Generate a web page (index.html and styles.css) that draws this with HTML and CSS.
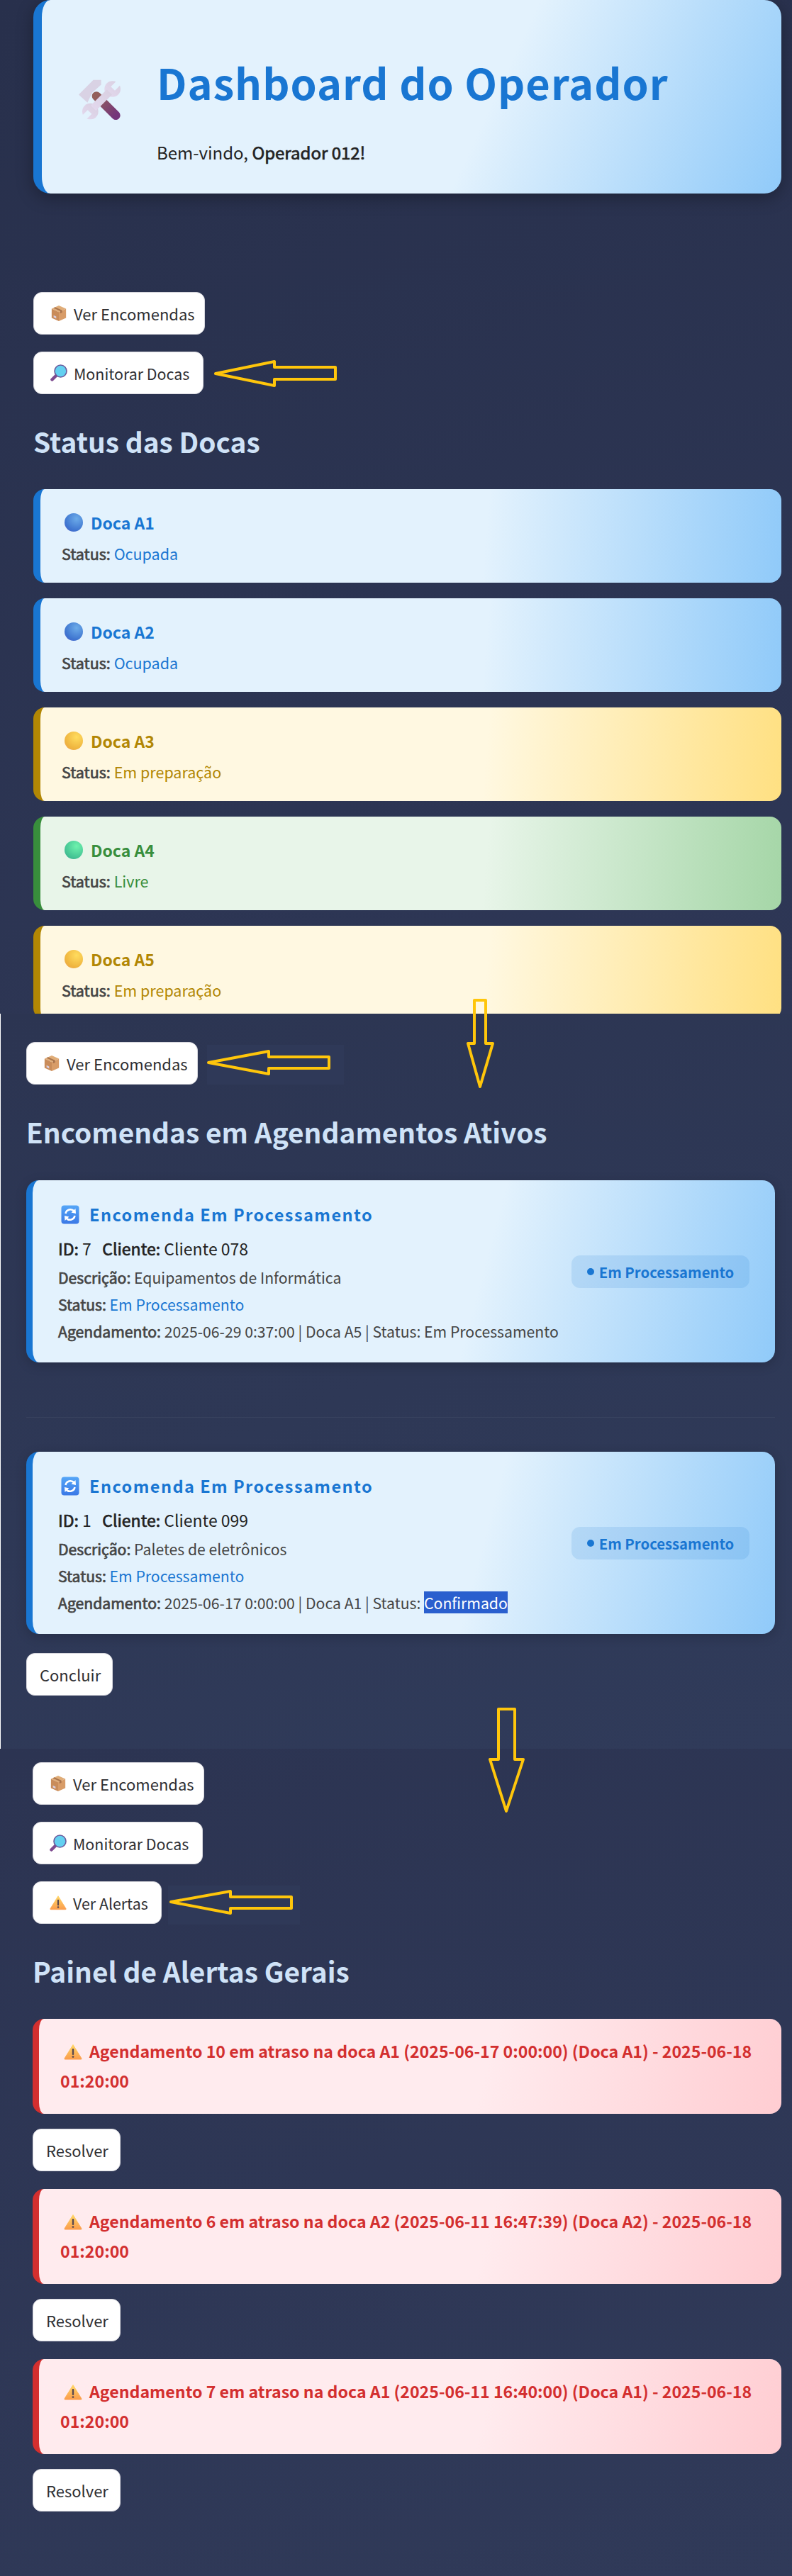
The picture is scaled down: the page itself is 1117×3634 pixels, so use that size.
FILE: index.html
```html
<!DOCTYPE html>
<html lang="pt">

<head>
    <meta charset="utf-8">
    <title>Dashboard do Operador</title>
    <link rel="stylesheet" href="styles.css">
</head>

<body>
    <svg class="defs" width="0" height="0">
        <defs>
            <linearGradient id="gCabo" x1="0" y1="0" x2="1" y2="1">
                <stop offset="0" stop-color="#94605a" />
                <stop offset="1" stop-color="#74357a" />
            </linearGradient>
            <linearGradient id="gChave" x1="1" y1="0" x2="0" y2="1">
                <stop offset="0" stop-color="#d8cfe0" />
                <stop offset="1" stop-color="#e4d9ef" />
            </linearGradient>
            <linearGradient id="gAviso" x1="0" y1="0" x2="0" y2="1">
                <stop offset="0" stop-color="#ffd768" />
                <stop offset="1" stop-color="#fb9d4c" />
            </linearGradient>
            <linearGradient id="gSync" x1="0" y1="0" x2="0" y2="1">
                <stop offset="0" stop-color="#55a6f7" />
                <stop offset="1" stop-color="#3a78e6" />
            </linearGradient>
            <mask id="mChave" maskUnits="userSpaceOnUse" x="243" y="158" width="177" height="170">
                <rect x="243" y="158" width="177" height="170" fill="#fff" />
                <polygon points="396,205 379,188 422,145 439,162" fill="#000" />
                <polygon points="298,304 281,287 239,329 256,346" fill="#000" />
            </mask>
            <symbol id="iFerramentas" viewBox="243 158 177 170">
                <line x1="318" y1="228" x2="400" y2="310" stroke="url(#gCabo)" stroke-width="38" stroke-linecap="round" />
                <polygon points="243,222 305,160 338,160 338,180 300,214 280,256" fill="#d9d2e4" />
                <g mask="url(#mChave)" fill="url(#gChave)">
                    <circle cx="386" cy="198" r="34" />
                    <circle cx="292" cy="293" r="34" />
                    <polygon points="362,200 384,222 316,290 294,268" />
                </g>
            </symbol>
            <symbol id="iCaixa" viewBox="0 0 24 26">
                <polygon points="12,1 23,6 12,11 1,6" fill="#e0ad78" />
                <polygon points="1,6 12,11 12,25 1,20" fill="#c98c5a" />
                <polygon points="23,6 12,11 12,25 23,20" fill="#d89c68" />
                <polygon points="6,3.5 17,8.5 17,12 14,13 14,9.5 4,5" fill="#a8734c" />
                <polygon points="4,16 8,18 8,21 4,19" fill="#d9cfe0" />
            </symbol>
            <symbol id="iLupa" viewBox="0 0 24 24">
                <line x1="9" y1="15" x2="2.5" y2="21.5" stroke="#7d4a8f" stroke-width="4.5" stroke-linecap="round" />
                <circle cx="14.5" cy="9.5" r="8.5" fill="#63d0f0" stroke="#6a5a9c" stroke-width="1.6" />
            </symbol>
            <symbol id="iAviso" viewBox="0 0 26 23">
                <path d="M13 1.5 L25 21 Q25.5 22 24 22 L2 22 Q.5 22 1 21 Z" fill="url(#gAviso)" stroke="url(#gAviso)" stroke-width="1" stroke-linejoin="round" />
                <rect x="11.8" y="7" width="2.4" height="9" rx="1" fill="#5b4a50" />
                <circle cx="13" cy="18.6" r="1.4" fill="#5b4a50" />
            </symbol>
            <symbol id="iSync" viewBox="0 0 26 27">
                <rect x=".5" y=".5" width="25" height="26" rx="4" fill="url(#gSync)" />
                <path d="M6.5 12 A7 7 0 0 1 18.5 8.5" fill="none" stroke="#fff" stroke-width="2.6" />
                <polygon points="20.5,5 21,12 14.5,10.5" fill="#fff" />
                <path d="M19.5 15 A7 7 0 0 1 7.5 18.5" fill="none" stroke="#fff" stroke-width="2.6" />
                <polygon points="5.5,22 5,15 11.5,16.5" fill="#fff" />
            </symbol>
        </defs>
    </svg>

    <div class="pagina">
        <!-- Primeira tela -->
        <section class="tela tela-docas">
            <header class="hero">
                <svg class="hero-icone"><use href="#iFerramentas" /></svg>
                <div class="hero-texto">
                    <h1>Dashboard do Operador</h1>
                    <p>Bem-vindo, <b>Operador 012!</b></p>
                </div>
            </header>

            <div class="botoes">
                <a class="btn btn-enc"><svg class="btn-icone"><use href="#iCaixa" /></svg>Ver Encomendas</a>
                <a class="btn btn-mon"><svg class="btn-icone"><use href="#iLupa" /></svg>Monitorar Docas</a>
            </div>

            <h2>Status das Docas</h2>

            <div class="doca azul">
                <div class="doca-nome"><i class="esfera"></i>Doca A1</div>
                <div class="doca-status"><b>Status:</b> <span>Ocupada</span></div>
            </div>
            <div class="doca azul">
                <div class="doca-nome"><i class="esfera"></i>Doca A2</div>
                <div class="doca-status"><b>Status:</b> <span>Ocupada</span></div>
            </div>
            <div class="doca amarelo">
                <div class="doca-nome"><i class="esfera"></i>Doca A3</div>
                <div class="doca-status"><b>Status:</b> <span>Em preparação</span></div>
            </div>
            <div class="doca verde">
                <div class="doca-nome"><i class="esfera"></i>Doca A4</div>
                <div class="doca-status"><b>Status:</b> <span>Livre</span></div>
            </div>
            <div class="doca amarelo">
                <div class="doca-nome"><i class="esfera"></i>Doca A5</div>
                <div class="doca-status"><b>Status:</b> <span>Em preparação</span></div>
            </div>
        </section>

        <!-- Segunda tela -->
        <section class="tela tela-encomendas">
            <a class="btn btn-enc"><svg class="btn-icone"><use href="#iCaixa" /></svg>Ver Encomendas</a>

            <h2>Encomendas em Agendamentos Ativos</h2>

            <div class="encomenda">
                <div class="enc-info">
                    <div class="enc-titulo"><svg class="enc-icone"><use href="#iSync" /></svg>Encomenda Em Processamento</div>
                    <div class="enc-id"><b>ID:</b> 7 &nbsp; <b>Cliente:</b> Cliente 078</div>
                    <div class="enc-linha"><b>Descrição:</b> Equipamentos de Informática</div>
                    <div class="enc-linha"><b>Status:</b> <span class="enc-azul">Em Processamento</span></div>
                    <div class="enc-linha"><b>Agendamento:</b> 2025-06-29 0:37:00 | Doca A5 | Status: Em Processamento</div>
                </div>
                <div class="selo"><i class="selo-ponto"></i>Em Processamento</div>
            </div>

            <hr class="divisor">

            <div class="encomenda">
                <div class="enc-info">
                    <div class="enc-titulo"><svg class="enc-icone"><use href="#iSync" /></svg>Encomenda Em Processamento</div>
                    <div class="enc-id"><b>ID:</b> 1 &nbsp; <b>Cliente:</b> Cliente 099</div>
                    <div class="enc-linha"><b>Descrição:</b> Paletes de eletrônicos</div>
                    <div class="enc-linha"><b>Status:</b> <span class="enc-azul">Em Processamento</span></div>
                    <div class="enc-linha"><b>Agendamento:</b> 2025-06-17 0:00:00 | Doca A1 | Status: <mark>Confirmado</mark></div>
                </div>
                <div class="selo"><i class="selo-ponto"></i>Em Processamento</div>
            </div>

            <a class="btn btn-concluir">Concluir</a>
        </section>

        <!-- Terceira tela -->
        <section class="tela tela-alertas">
            <div class="botoes">
                <a class="btn btn-enc"><svg class="btn-icone"><use href="#iCaixa" /></svg>Ver Encomendas</a>
                <a class="btn btn-mon"><svg class="btn-icone"><use href="#iLupa" /></svg>Monitorar Docas</a>
                <a class="btn btn-ale"><svg class="btn-icone"><use href="#iAviso" /></svg>Ver Alertas</a>
            </div>

            <h2>Painel de Alertas Gerais</h2>

            <div class="alerta"><svg class="alerta-icone"><use href="#iAviso" /></svg>Agendamento 10 em atraso na doca A1 (2025-06-17 0:00:00) (Doca A1) - <span class="data">2025-06-18</span> 01:20:00</div>
            <a class="btn btn-resolver">Resolver</a>
            <div class="alerta"><svg class="alerta-icone"><use href="#iAviso" /></svg>Agendamento 6 em atraso na doca A2 (2025-06-11 16:47:39) (Doca A2) - <span class="data">2025-06-18</span> 01:20:00</div>
            <a class="btn btn-resolver">Resolver</a>
            <div class="alerta"><svg class="alerta-icone"><use href="#iAviso" /></svg>Agendamento 7 em atraso na doca A1 (2025-06-11 16:40:00) (Doca A1) - <span class="data">2025-06-18</span> 01:20:00</div>
            <a class="btn btn-resolver">Resolver</a>
        </section>

        <!-- Setas amarelas por cima das telas -->
        <svg class="setas" viewBox="0 0 1117 3634">
            <rect class="remendo" x="292" y="1474" width="193" height="56" />
            <rect class="remendo" x="237" y="2660" width="186" height="55" />
            <polygon class="seta" points="304,527 387,510 387,518 473,518 473,535 387,535 387,544" />
            <polygon class="seta" points="669,1411 685,1411 685,1472 695,1472 677,1533 660,1472 669,1472" />
            <polygon class="seta" points="294,1499 379,1483 379,1491 464,1491 464,1507 379,1507 379,1515" />
            <polygon class="seta" points="703,2411 726,2411 726,2482 738,2482 714,2555 691,2482 703,2482" />
            <polygon class="seta" points="241,2683 325,2668 325,2676 411,2676 411,2692 325,2692 325,2699" />
        </svg>
    </div>
</body>

</html>
```

FILE: styles.css
```css
* {
    box-sizing: border-box;
}

body {
    margin: 0;
    padding: 0;
    background: #2d3654;
    font-family: "Noto Sans CJK SC", "Noto Sans", sans-serif;
    color: #222;
}

b {
    font-weight: 400;
    -webkit-text-stroke: 0.7px currentColor;
}

.defs {
    position: absolute;
}

.pagina {
    position: relative;
    width: 1117px;
    height: 3634px;
    overflow: hidden;
}

.setas {
    position: absolute;
    top: 0;
    left: 0;
    width: 1117px;
    height: 3634px;
}

.seta {
    fill: none;
    stroke: #ffc60b;
    stroke-width: 4;
    stroke-linejoin: round;
}

.remendo {
    fill: #2f3958;
}

.tela {
    overflow: hidden;
}

.tela-docas {
    height: 1430px;
    padding: 0 15px 0 47px;
    background: linear-gradient(160deg, #28304c 0%, #2e3756 100%);
}

.tela-encomendas {
    height: 1037px;
    padding: 40px 24px 0 36px;
    background: linear-gradient(160deg, #2c3552 0%, #303b5a 100%);
    border-left: 1px solid #fff;
}

.tela-alertas {
    height: 1167px;
    padding: 19px 15px 0 46px;
    background: linear-gradient(160deg, #2c3452 0%, #303a59 100%);
}

h2 {
    margin: 0;
    font-size: 38.8px;
    line-height: 56px;
    font-weight: 700;
    color: #cfe2f7;
}

/* Cabeçalho */
.hero {
    display: flex;
    align-items: center;
    height: 273px;
    padding-left: 52px;
    border-left: 12px solid #1976d2;
    border-radius: 24px;
    background: linear-gradient(115deg, #e3f2fd 60%, #90caf9 100%);
    box-shadow: 0 6px 24px rgba(0, 0, 0, 0.3);
}

.hero-icone {
    width: 59px;
    height: 57px;
    flex: none;
    margin-right: 51px;
    margin-top: 8px;
}

.hero-texto {
    padding-top: 30px;
}

.hero h1 {
    margin: 0;
    font-size: 59.5px;
    line-height: 90px;
    font-weight: 700;
    letter-spacing: 1px;
    color: #1976d2;
}

.hero p {
    margin: 37px 0 0;
    font-size: 24px;
    line-height: 36px;
}

/* Botões */
.botoes {
    display: flex;
    flex-direction: column;
    align-items: flex-start;
    gap: 24px;
}

.tela-docas .botoes {
    margin-top: 139px;
}

.tela-docas h2 {
    margin-top: 38px;
    margin-bottom: 40px;
}

.btn {
    display: flex;
    align-items: center;
    height: 60px;
    padding: 0 18px;
    background: #fff;
    border: 1px solid #d8d8de;
    border-radius: 12px;
    font-size: 22px;
    white-space: nowrap;
    color: #2f2f33;
}

.btn-enc {
    width: 242px;
}

.btn-mon {
    width: 240px;
    font-size: 21.4px;
}

.btn-ale {
    width: 182px;
    font-size: 21.4px;
}

.btn-icone {
    width: 24px;
    height: 24px;
    flex: none;
    margin: 0 9px 0 5px;
}

/* Docas */
.doca {
    height: 132px;
    margin-bottom: 22px;
    padding: 30px 0 0 30px;
    border-left: 10px solid;
    border-radius: 16px;
}

.doca-nome {
    display: flex;
    align-items: center;
    height: 34px;
    padding-left: 4px;
    font-size: 23px;
    font-weight: 700;
}

.esfera {
    width: 26px;
    height: 26px;
    margin-right: 11px;
    border-radius: 50%;
}

.doca-status {
    margin-top: 11px;
    line-height: 32px;
    font-size: 21.5px;
}

.doca-status b {
    color: #444;
}

.azul {
    border-color: #1976d2;
    background: linear-gradient(95deg, #e3f2fd 60%, #90caf9 100%);
}

.azul .doca-nome,
.azul .doca-status span {
    color: #1976d2;
}

.azul .esfera {
    background: radial-gradient(circle at 65% 30%, #6cabe9, #3f76d0 65%, #4b56c8 100%);
}

.amarelo {
    border-color: #b28704;
    background: linear-gradient(95deg, #fff8e1 60%, #ffe082 100%);
}

.amarelo .doca-nome,
.amarelo .doca-status span {
    color: #b28704;
}

.amarelo .esfera {
    background: radial-gradient(circle at 65% 30%, #ffdc5e, #efb53f 65%, #ec9c57 100%);
}

.verde {
    border-color: #388e3c;
    background: linear-gradient(95deg, #e8f5e9 60%, #a5d6a7 100%);
}

.verde .doca-nome,
.verde .doca-status span {
    color: #388e3c;
}

.verde .esfera {
    background: radial-gradient(circle at 65% 30%, #6ef2ad, #45c494 65%, #3aa08f 100%);
}

/* Encomendas */
.tela-encomendas h2 {
    margin-top: 38px;
    margin-bottom: 41px;
}

.encomenda {
    display: flex;
    align-items: center;
    justify-content: space-between;
    height: 257px;
    padding: 0 36px;
    border-left: 9px solid #1976d2;
    border-radius: 18px;
    background: linear-gradient(105deg, #e3f2fd 60%, #90caf9 100%);
    box-shadow: 0 4px 16px rgba(0, 0, 0, 0.18);
}

.enc-info {
    align-self: flex-start;
    padding-top: 31px;
    white-space: nowrap;
}

.enc-titulo {
    display: flex;
    align-items: center;
    height: 34px;
    padding-left: 4px;
    font-size: 23.5px;
    font-weight: 700;
    letter-spacing: 1.45px;
    color: #1976d2;
}

.enc-icone {
    width: 26px;
    height: 27px;
    flex: none;
    margin-right: 14px;
}

.enc-id {
    margin-top: 11px;
    line-height: 40px;
    font-size: 23px;
}

.enc-linha {
    line-height: 38px;
    font-size: 21.2px;
    color: #444;
}

.enc-id + .enc-linha {
    margin-top: 2px;
}

.enc-azul {
    color: #1976d2;
}

mark {
    background: #2a5fce;
    color: #fff;
}

.selo {
    display: flex;
    align-items: center;
    justify-content: center;
    width: 251px;
    height: 46px;
    flex: none;
    font-size: 20.3px;
    font-weight: 700;
    color: #1976d2;
    border-radius: 12px;
    background: rgba(25, 118, 210, 0.13);
}

.selo-ponto {
    width: 10px;
    height: 10px;
    margin-right: 7px;
    border-radius: 50%;
    background: #1976d2;
}

.divisor {
    height: 1px;
    margin: 77px 0 48px;
    border: 0;
    background: rgba(255, 255, 255, 0.05);
}

.btn-concluir {
    width: 122px;
    margin-top: 27px;
}

/* Alertas */
.tela-alertas h2 {
    margin-top: 38px;
    margin-bottom: 40px;
}

.alerta {
    margin-bottom: 21px;
    height: 134px;
    padding: 24px 30px 0 30px;
    border-left: 9px solid #d32f2f;
    border-radius: 16px;
    background: linear-gradient(105deg, #ffebee 60%, #ffcdd2 100%);
    line-height: 42px;
    font-size: 23.15px;
    font-weight: 700;
    color: #d32f2f;
}

.alerta .data {
    white-space: nowrap;
}

.alerta-icone {
    display: inline-block;
    width: 26px;
    height: 23px;
    margin: 0 10px 0 5px;
    vertical-align: -3px;
}

.btn-resolver {
    width: 124px;
    margin-bottom: 25px;
}
```
